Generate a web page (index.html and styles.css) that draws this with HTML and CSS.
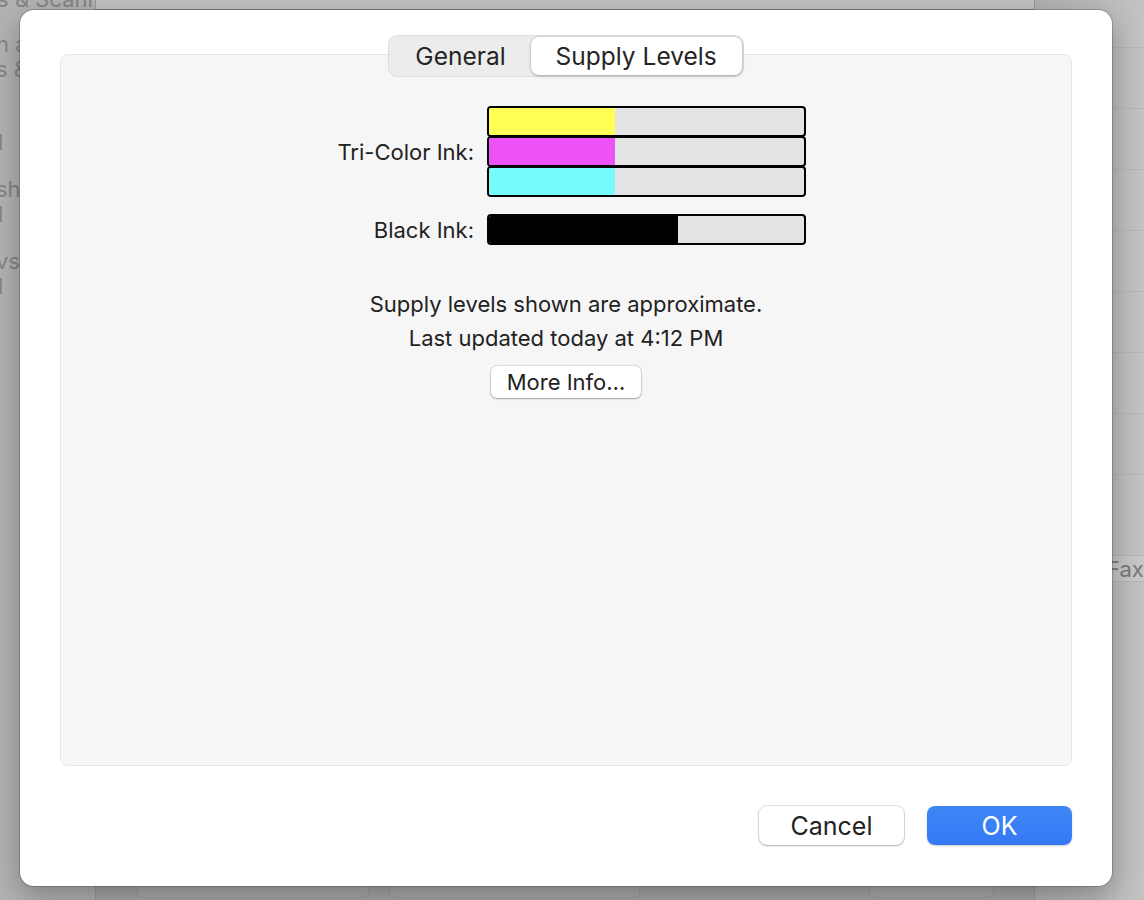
FILE: index.html
```html
<!DOCTYPE html>
<html lang="en">
<head>
    <meta charset="UTF-8">
    <meta name="viewport" content="width=device-width, initial-scale=1.0">
    <title>Printer Options - Supply Levels</title>
    <link rel="stylesheet" href="styles.css">
</head>

<body>
  <div class="desktop">
    <!-- dimmed settings window behind the sheet -->
    <div class="back-window">
      <div class="sidebar">
        <div class="window-title">Printers &amp; Scanners</div>
        <ul class="side-items">
          <li class="gap-top">n and Privacy</li>
          <li>s &amp; Dock</li>
          <li class="gap-more thin">l</li>
          <li class="gap-mid">sharing</li>
          <li class="thin">l</li>
          <li class="gap-mid">vs</li>
          <li class="thin">l</li>
        </ul>
      </div>
      <div class="back-main">
        <div class="back-toolbar"></div>
        <div class="back-body"></div>
        <div class="back-buttons">
          <span class="ghost-btn wide"></span>
          <span class="ghost-btn wider"></span>
          <span class="spacer"></span>
          <span class="ghost-btn"></span>
        </div>
      </div>
    </div>
    <div class="side-list">
      <div class="row"></div>
      <div class="row"></div>
      <div class="row"></div>
      <div class="row"></div>
      <div class="row"></div>
      <div class="row"></div>
      <div class="row"></div>
      <div class="row"></div>
      <div class="row fax">Fax</div>
    </div>
  </div>

  <div class="sheet">
    <div class="segmented">
      <div class="segment">General</div>
      <div class="segment selected">Supply Levels</div>
    </div>

    <div class="panel">
      <div class="levels">
        <div class="label">Tri-Color Ink:</div>
        <div class="bar-stack">
          <div class="bar"><div class="fill yellow" style="width: 40%"></div></div>
          <div class="bar"><div class="fill magenta" style="width: 40%"></div></div>
          <div class="bar"><div class="fill cyan" style="width: 40%"></div></div>
        </div>

        <div class="label">Black Ink:</div>
        <div class="bar-stack">
          <div class="bar"><div class="fill black" style="width: 60%"></div></div>
        </div>
      </div>

      <div class="note">
        <p>Supply levels shown are approximate.</p>
        <p>Last updated today at 4:12 PM</p>
        <button class="push-btn">More Info…</button>
      </div>
    </div>

    <div class="sheet-actions">
      <button class="push-btn big">Cancel</button>
      <button class="push-btn big primary">OK</button>
    </div>
  </div>
</body>

</html>
```

FILE: styles.css
```css
* {
    box-sizing: border-box;
    margin: 0;
    padding: 0;
}

body {
    width: 1144px;
    height: 900px;
    overflow: hidden;
    background: #aaaaaa;
    font-family: 'Inter', 'Liberation Sans', sans-serif;
    color: #222;
    position: relative;
}

/* ---------- background window ---------- */

.desktop {
    display: flex;
    height: 900px;
}

.back-window {
    width: 1035px;
    display: flex;
    border-right: 1px solid #9a9a9a;
}

.sidebar {
    width: 95px;
    background: #b3b3b3;
    color: #858585;
    font-size: 22px;
    overflow: hidden;
    white-space: nowrap;
}

.window-title {
    margin-top: -14px;
    margin-left: -72px;
    line-height: 26px;
}

.side-items {
    list-style: none;
    margin-left: -4px;
}

.side-items li {
    line-height: 25px;
}

.side-items .thin { padding-left: 2px; }
.side-items .gap-top { margin-top: 20px; }
.side-items .gap-more { margin-top: 48px; }
.side-items .gap-mid { margin-top: 22px; }

.back-main {
    flex: 1;
    display: flex;
    flex-direction: column;
    background: #a8a8a8;
    border-left: 1px solid #999;
}

.back-toolbar {
    height: 10px;
    background: #c2c2c2;
    border-bottom: 1px solid #8f8f8f;
}

.back-body {
    flex: 1;
}

.back-buttons {
    display: flex;
    gap: 20px;
    padding: 0 40px 2px 41px;
}

.ghost-btn {
    width: 125px;
    height: 18px;
    border: 1px solid #9e9e9e;
    border-top: none;
    border-radius: 0 0 6px 6px;
    background: #acacac;
}

.ghost-btn.wide { width: 232px; }
.ghost-btn.wider { width: 251px; }

.spacer { flex: 1; }

.side-list {
    flex: 1;
    background: linear-gradient(90deg, #b1b1b1, #c3c3c3);
    display: flex;
    flex-direction: column;
    padding-top: 47px;
}

.side-list .row {
    height: 61px;
    border-top: 1px solid #b6b6b6;
}

.side-list .fax {
    height: 27px;
    margin-top: 20px;
    padding-left: 72px;
    background: #c7c7c7;
    color: #7a7a7a;
    font-size: 22px;
    line-height: 26px;
    border-bottom: 1px solid #b6b6b6;
}

/* ---------- the sheet ---------- */

.sheet {
    position: absolute;
    left: 20px;
    top: 10px;
    width: 1092px;
    height: 876px;
    background: #ffffff;
    border-radius: 14px;
    box-shadow: 0 0 0 1px rgba(0, 0, 0, 0.18), 0 10px 30px rgba(0, 0, 0, 0.3);
    padding: 25px 40px 41px;
    display: flex;
    flex-direction: column;
}

.segmented {
    align-self: center;
    position: relative;
    z-index: 1;
    display: flex;
    padding: 1px;
    background: #ececec;
    border: 1px solid #dddddd;
    border-radius: 9px;
    font-size: 24.5px;
    height: 42px;
}

.segment {
    padding: 0 25px;
    display: flex;
    align-items: center;
    color: #252525;
}

.segment.selected {
    background: #ffffff;
    border-radius: 8px;
    box-shadow: 0 1px 3px rgba(0, 0, 0, 0.25), 0 0 0 0.5px rgba(0, 0, 0, 0.12);
}

.panel {
    margin-top: -23px;
    flex: 1;
    background: #f6f6f6;
    border: 1px solid #e6e6e6;
    border-radius: 8px;
    padding-top: 51px;
}

.levels {
    display: grid;
    grid-template-columns: 1fr 319px 252px;
    column-gap: 13px;
    row-gap: 17px;
    align-items: center;
}

.label {
    grid-column: 1;
    text-align: right;
    font-size: 22px;
}

.bar-stack {
    grid-column: 2;
    display: flex;
    flex-direction: column;
}

.bar {
    height: 31px;
    border: 2px solid #000;
    border-radius: 4px;
    background: #e4e4e4;
    overflow: hidden;
}

.bar + .bar {
    margin-top: -1px;
}

.fill {
    height: 100%;
}

.fill.yellow { background: #ffff55; }
.fill.magenta { background: #ec52f6; }
.fill.cyan { background: #75fbfc; }
.fill.black { background: #000000; }

.note {
    margin-top: 42px;
    display: flex;
    flex-direction: column;
    align-items: center;
    font-size: 22px;
    line-height: 34px;
}

.push-btn {
    font-family: inherit;
    color: #222;
    background: #ffffff;
    border: none;
    border-radius: 6px;
    box-shadow: 0 0 0 1px rgba(0, 0, 0, 0.1), 0 1px 2px rgba(0, 0, 0, 0.25);
    font-size: 22px;
    height: 32px;
    padding: 0 16px;
    margin-top: 11px;
}

.sheet-actions {
    display: flex;
    justify-content: flex-end;
    gap: 23px;
    margin-top: 40px;
}

.push-btn.big {
    width: 145px;
    height: 39px;
    font-size: 25px;
    margin-top: 0;
    border-radius: 8px;
}

.push-btn.primary {
    background: linear-gradient(180deg, #3f86f7, #3479f4);
    color: #ffffff;
    box-shadow: 0 1px 2px rgba(0, 0, 0, 0.2);
}
```
